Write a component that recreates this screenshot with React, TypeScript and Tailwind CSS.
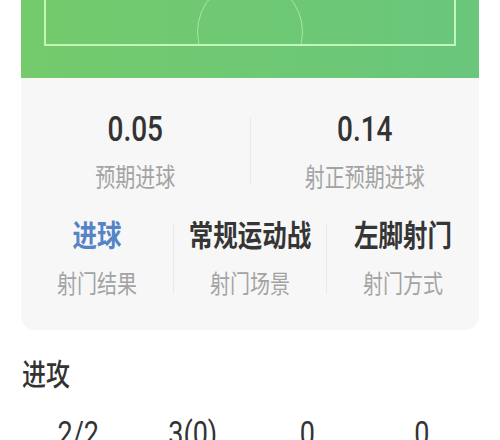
const FONT = "font-['Roboto','Noto_Sans_CJK_SC',sans-serif]";

function Divider({ className }: { className: string }) {
  return <div className={`w-px shrink-0 bg-[#e9e9e9] ${className}`} />;
}

function Stat({ value, label }: { value: string; label: string }) {
  return (
    <div className="flex flex-1 flex-col items-center">
      <div className="scale-y-[1.25] text-[28px] leading-[36px] font-medium text-[#333]">{value}</div>
      <div className="mt-[18px] scale-y-[1.28] text-[20px] leading-[24px] text-[#a3a3a3]">{label}</div>
    </div>
  );
}

function Info({ value, label, blue }: { value: string; label: string; blue?: boolean }) {
  return (
    <div className="flex flex-1 flex-col items-center">
      <div
        className={`scale-y-[1.2] text-[24.5px] leading-[30px] font-bold ${blue ? "text-[#5584c6]" : "text-[#353535]"}`}
      >
        {value}
      </div>
      <div className="mt-[21px] scale-y-[1.25] text-[20px] leading-[24px] text-[#a3a3a3]">{label}</div>
    </div>
  );
}

export default function App() {
  const attack = ["2/2", "3(0)", "0", "0"];
  return (
    <div className={`h-[440px] w-[500px] overflow-hidden bg-white ${FONT}`}>
      <div className="mx-[21px] overflow-hidden rounded-b-[14px] bg-[#f7f7f7]">
        {/* pitch */}
        <div className="bg-linear-to-r from-[#74cb6c] to-[#69c67b] px-[23px] pb-[32px]">
          <div className="relative h-[46px] overflow-hidden border-x-[2.5px] border-b-[2.5px] border-[#c2f5b9]">
            <div className="absolute left-1/2 top-[-21px] h-[106px] w-[106px] -translate-x-1/2 rounded-full border-[1.5px] border-[#a6e6a0]" />
          </div>
        </div>

        <div className="flex pt-[34px]">
          <Stat value="0.05" label="预期进球" />
          <Divider className="my-[6px]" />
          <Stat value="0.14" label="射正预期进球" />
        </div>

        <div className="flex pt-[31px] pb-[34px]">
          <Info value="进球" label="射门结果" blue />
          <Divider className="my-[2px]" />
          <Info value="常规运动战" label="射门场景" />
          <Divider className="my-[2px]" />
          <Info value="左脚射门" label="射门方式" />
        </div>
      </div>

      <div className="mt-[29px] px-[22px] scale-y-[1.22] origin-left text-[24px] leading-[32px] font-medium text-[#333]">进攻</div>

      <div className="mx-[21px] mt-[27px] flex">
        {attack.map((v, i) => (
          <div key={i} className="flex-1 scale-y-[1.25] text-center text-[27px] leading-[32px] text-[#333]">
            {v}
          </div>
        ))}
      </div>
    </div>
  );
}
